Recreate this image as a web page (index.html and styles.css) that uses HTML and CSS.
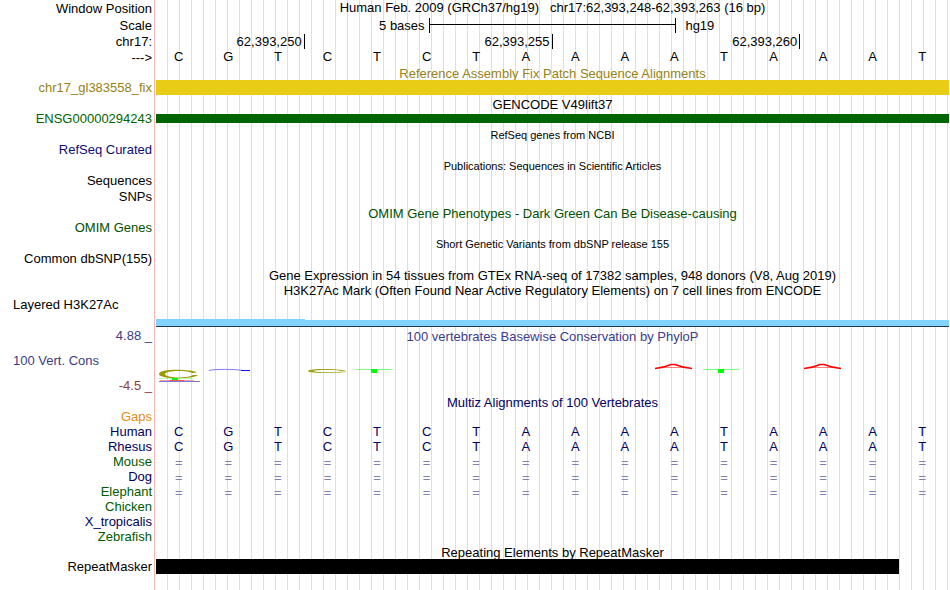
FILE: index.html
```html
<!DOCTYPE html>
<html lang="en">
<head>
<meta charset="utf-8">
<title>chr17:62,393,248-62,393,263 - Genome Browser</title>
<link rel="stylesheet" href="styles.css">
</head>
<body>
<main class="browser">
  <section>
    <div class="row head"><div class="label">Window Position</div><h1 class="title position">Human Feb. 2009 (GRCh37/hg19) &nbsp; chr17:62,393,248-62,393,263 (16 bp)</h1></div>
    <div class="row head"><div class="label">Scale</div><div class="scale"><span class="scale-size">5 bases</span><span class="scale-bar"></span><span class="scale-db">hg19</span></div></div>
    <div class="row coordinates"><div class="label">chr17:</div><div class="ruler"><span class="tick first">62,393,250</span><span class="tick">62,393,255</span><span class="tick">62,393,260</span></div></div>
    <div class="row"><div class="label">---&gt;</div><div class="bases sequence"><span>C</span><span>G</span><span>T</span><span>C</span><span>T</span><span>C</span><span>T</span><span>A</span><span>A</span><span>A</span><span>A</span><span>T</span><span>A</span><span>A</span><span>A</span><span>T</span></div></div>
  </section>

  <section class="olive">
    <div class="row"><h2 class="title">Reference Assembly Fix Patch Sequence Alignments</h2></div>
    <div class="row"><div class="label">chr17_gl383558_fix</div><div class="bar patch"></div></div>
  </section>

  <section>
    <div class="row gap"><h2 class="title">GENCODE V49lift37</h2></div>
    <div class="row"><div class="label gene">ENSG00000294243</div><div class="bar transcript"></div></div>
  </section>

  <section>
    <div class="row gap"><h2 class="title small">RefSeq genes from NCBI</h2></div>
    <div class="row"><div class="label refseq">RefSeq Curated</div></div>
  </section>

  <section>
    <div class="row gap"><h2 class="title small">Publications: Sequences in Scientific Articles</h2></div>
    <div class="row"><div class="label">Sequences</div></div>
    <div class="row gap"><div class="label">SNPs</div></div>
  </section>

  <section class="omim">
    <div class="row gap"><h2 class="title">OMIM Gene Phenotypes - Dark Green Can Be Disease-causing</h2></div>
    <div class="row"><div class="label">OMIM Genes</div></div>
  </section>

  <section>
    <div class="row gap"><h2 class="title small">Short Genetic Variants from dbSNP release 155</h2></div>
    <div class="row"><div class="label">Common dbSNP(155)</div></div>
  </section>

  <section>
    <div class="row gap"><h2 class="title">Gene Expression in 54 tissues from GTEx RNA-seq of 17382 samples, 948 donors (V8, Aug 2019)</h2></div>
  </section>

  <section>
    <div class="row"><h2 class="title">H3K27Ac Mark (Often Found Near Active Regulatory Elements) on 7 cell lines from ENCODE</h2></div>
    <div class="row signal"><div class="label left">Layered H3K27Ac</div><div class="signal-plot"><span class="high"></span><span class="low"></span></div></div>
  </section>

  <section class="row conservation">
    <div class="axis"><span class="label">4.88 _</span><span class="label left">100 Vert. Cons</span><span class="label min">-4.5 _</span></div>
    <div class="plot">
      <h2 class="title">100 vertebrates Basewise Conservation by PhyloP</h2>
      <svg class="logo" viewBox="0 0 793 50" preserveAspectRatio="none" aria-hidden="true">
        <path fill="#990" d="M41 29.5C35 26 3 25.4 3 31C3 36.6 37 36.4 42 32H37C33 35.4 9 35.4 9 31C9 27 32 27.2 36 30Z"/>
        <path fill="#0f0" fill-opacity=".25" d="M2 35H39V36H2Z"/>
        <path fill="#0f0" d="M16 35H22V37H16Z"/>
        <path fill="#fa9c9c" d="M4 37H38V38H4Z"/>
        <path fill="#f55" d="M14 37H28V38H14Z"/>
        <path fill="#77d" d="M3 38H44V39H3Z"/>
        <path fill="none" stroke="#55f" stroke-opacity=".8" d="M53 27.5C58 26 78 26 87 27.5H94"/>
        <path fill="#11f" d="M85 27H94V28H85Z"/>
        <path fill="#990" fill-opacity=".9" d="M190 27.6C184 25.8 152 25.2 152 28C152 30.8 184 30.6 191 28.4H187C181 29.6 158 29.6 158 28C158 26.7 180 26.7 185 28Z"/>
        <path fill="#0f0" fill-opacity=".5" d="M200 26H236V27H200ZM547 26H583V27H547Z"/>
        <path fill="#0f0" d="M215 26H221V30H215ZM562 26H568V30H562Z"/>
        <g fill="none" stroke="#f00">
          <path stroke-width="1.4" d="M499 25.5Q507 25 515 21.5H519Q528 25 536 25.5M648 25.5Q656 25 664 21.5H668Q677 25 685 25.5"/>
          <path stroke-opacity=".5" d="M508 24.5H527M657 24.5H676"/>
        </g>
      </svg>
    </div>
  </section>

  <section class="navy">
    <div class="row gap"><h2 class="title">Multiz Alignments of 100 Vertebrates</h2></div>
    <div class="row"><div class="label gaps">Gaps</div></div>
    <div class="row"><div class="label">Human</div><div class="bases"><span>C</span><span>G</span><span>T</span><span>C</span><span>T</span><span>C</span><span>T</span><span>A</span><span>A</span><span>A</span><span>A</span><span>T</span><span>A</span><span>A</span><span>A</span><span>T</span></div></div>
    <div class="row"><div class="label">Rhesus</div><div class="bases"><span>C</span><span>G</span><span>T</span><span>C</span><span>T</span><span>C</span><span>T</span><span>A</span><span>A</span><span>A</span><span>A</span><span>T</span><span>A</span><span>A</span><span>A</span><span>T</span></div></div>
    <div class="row"><div class="label alt">Mouse</div><div class="bases unaligned"><span>=</span><span>=</span><span>=</span><span>=</span><span>=</span><span>=</span><span>=</span><span>=</span><span>=</span><span>=</span><span>=</span><span>=</span><span>=</span><span>=</span><span>=</span><span>=</span></div></div>
    <div class="row"><div class="label">Dog</div><div class="bases unaligned"><span>=</span><span>=</span><span>=</span><span>=</span><span>=</span><span>=</span><span>=</span><span>=</span><span>=</span><span>=</span><span>=</span><span>=</span><span>=</span><span>=</span><span>=</span><span>=</span></div></div>
    <div class="row"><div class="label alt">Elephant</div><div class="bases unaligned"><span>=</span><span>=</span><span>=</span><span>=</span><span>=</span><span>=</span><span>=</span><span>=</span><span>=</span><span>=</span><span>=</span><span>=</span><span>=</span><span>=</span><span>=</span><span>=</span></div></div>
    <div class="row"><div class="label alt">Chicken</div></div>
    <div class="row"><div class="label">X_tropicalis</div></div>
    <div class="row"><div class="label alt">Zebrafish</div></div>
  </section>

  <section>
    <div class="row"><h2 class="title">Repeating Elements by RepeatMasker</h2></div>
    <div class="row"><div class="label">RepeatMasker</div><div class="bar repeat"></div></div>
  </section>
</main>
</body>
</html>
```
FILE: styles.css
```css
* {
  box-sizing: border-box;
}

body {
  margin: 0;
  background: #fff;
  color: #000;
  font: 13px/15px "Liberation Sans", Arial, Helvetica, sans-serif;
}

/* Label gutter with its red edge, then a guideline every 12px */
.browser {
  min-height: 100vh;
  padding-right: 1px;
  background:
    linear-gradient(90deg, #fff 154px, #ffb4b4 154px, #ffb4b4 155px, #fff 155px) 0 0 / 156px 100% no-repeat,
    linear-gradient(90deg, transparent 11px, #dcdcf8 11px) 156px 0 / 12px 100%;
}

.row {
  display: grid;
  grid-template-columns: 152px minmax(0, 1fr);
  column-gap: 4px;
  min-height: 15px;
}

.row.head {
  min-height: 17px;
  align-items: center;
}

.row.coordinates {
  min-height: 16px;
  align-items: start;
}

.row.gap {
  padding-top: 1px;
}

.label {
  text-align: right;
  white-space: nowrap;
}

.label.left {
  padding-left: 13px;
  text-align: left;
}

.title {
  grid-column: 2;
  margin: 0;
  padding-top: 2px;
  font-size: 13px;
  font-weight: normal;
  line-height: 13px;
  text-align: center;
  white-space: nowrap;
}

.title.small {
  font-size: 11px;
}

.title.position {
  padding: 0 0 2px;
}

.scale {
  display: grid;
  grid-template-columns: 1fr 31.25% 1fr;
}

.scale-size {
  padding-right: 4px;
  text-align: right;
}

.scale-bar {
  border: solid #000;
  border-width: 0 1px;
  background: linear-gradient(#000, #000) 0 6px / 100% 1px no-repeat;
}

.scale-db {
  padding-left: 9px;
}

.bases,
.ruler {
  display: grid;
  grid-template-columns: repeat(16, minmax(0, 1fr));
}

.bases {
  margin: 0 2px 0 -2px;
  text-align: center;
}

.sequence {
  line-height: 13px;
}

.tick {
  grid-column: span 5;
  padding-right: 2px;
  border-right: 1px solid #000;
  text-align: right;
}

.tick.first {
  grid-column: span 3;
}

.bar {
  align-self: center;
  height: 15px;
}

.bar.patch {
  background: #e8cc16;
}

.bar.transcript {
  height: 9px;
  background: #006400;
}

.bar.repeat {
  width: 93.75%;
  background: #000;
}

.signal-plot {
  display: grid;
  grid-template-columns: 3fr 13fr;
  align-items: end;
  border-bottom: 1px solid #203848;
}

.signal {
  min-height: 30px;
}

.high,
.low {
  height: 6px;
  background: #80d4ff;
}

.high {
  height: 7px;
}

.conservation {
  color: #3c3c8c;
  min-height: 66px;
  padding-top: 1px;
}

.axis {
  display: flex;
  flex-direction: column;
  gap: 10px;
}

.axis .min {
  color: #8c3c3c;
}

.plot {
  display: flex;
  flex-direction: column;
}

.logo {
  display: block;
  width: 100%;
  height: 50px;
}

.olive {
  color: #968214;
}

.gene {
  color: #006400;
}

.refseq {
  color: #0c0c78;
}

.omim {
  color: #005000;
}

.navy {
  color: #000064;
}

.gaps {
  color: #e68c14;
}

.alt {
  color: #005a00;
}

.unaligned {
  padding-top: 2px;
  line-height: 13px;
  color: #8080b4;
}
```
